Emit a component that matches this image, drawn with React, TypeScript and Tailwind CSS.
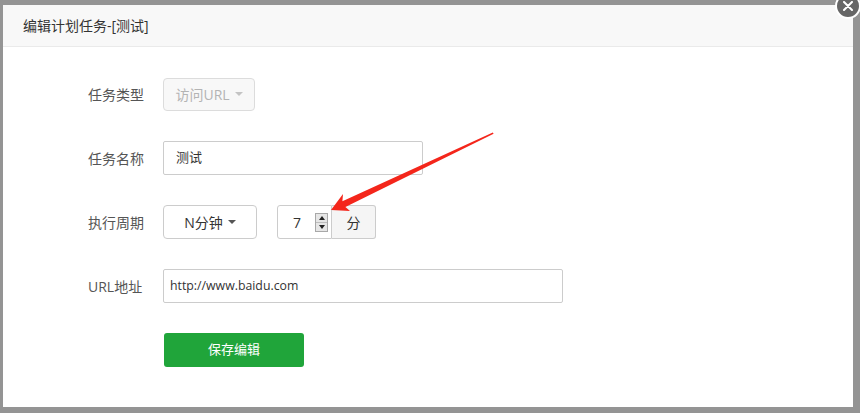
import React from 'react';

const font = "font-['Open_Sans','Noto_Sans_CJK_SC',sans-serif]";

function Caret({ color = '#777' }: { color?: string }) {
  return (
    <span
      className="inline-block w-0 h-0 border-x-[4px] border-x-transparent border-t-[4px] ml-[5px]"
      style={{ borderTopColor: color }}
    />
  );
}

function Spinner() {
  return (
    <div className="w-[13px] h-[19px] border border-[#a8a8a8] bg-[#e6e6e6] flex flex-col">
      <div className="flex-1 flex items-center justify-center border-b border-[#bdbdbd]">
        <span className="w-0 h-0 border-x-[3px] border-x-transparent border-b-[4px] border-b-[#222]" />
      </div>
      <div className="flex-1 flex items-center justify-center">
        <span className="w-0 h-0 border-x-[3px] border-x-transparent border-t-[4px] border-t-[#222]" />
      </div>
    </div>
  );
}

function Row({ label, children }: { label: string; children: React.ReactNode }) {
  return (
    <div className="flex items-center h-[34px]">
      <div className="w-[75px] text-[14px] text-[#555]">{label}</div>
      {children}
    </div>
  );
}

export default function App() {
  return (
    <div className={`relative w-[860px] h-[413px] bg-[#949494] overflow-hidden ${font}`}>
      <div className="relative ml-[3px] mt-[5px] w-[850px] h-[402px] bg-white">
        <div className="h-[42px] bg-[#f8f8f8] border-b border-[#eaeaea] pl-[20px] flex items-center text-[14px] text-[#333]">
          编辑计划任务-[测试]
        </div>

        <div className="pt-[30px] pl-[85px] flex flex-col gap-[30px]">
          <Row label="任务类型">
            <div className="w-[92px] h-[33px] border border-[#dcdcdc] rounded-[4px] bg-[#f8f8f8] flex items-center justify-center text-[14px] text-[#b4b4b4]">
              访问URL
              <Caret color="#c4c4c4" />
            </div>
          </Row>

          <Row label="任务名称">
            <div className="w-[260px] h-[34px] border border-[#ccc] rounded-[2px] flex items-center px-[12px] text-[13px] text-[#333]">
              测试
            </div>
          </Row>

          <Row label="执行周期">
            <div className="w-[94px] h-[34px] border border-[#ccc] rounded-[4px] bg-white flex items-center justify-center text-[14px] text-[#333]">
              N分钟
              <Caret color="#555" />
            </div>
            <div className="ml-[20px] flex h-[34px]">
              <div className="w-[55px] h-full border border-[#ccc] rounded-l-[3px] flex items-center justify-end pr-[3px] text-[14px] text-[#333]">
                7
                <div className="ml-[14px]">
                  <Spinner />
                </div>
              </div>
              <div className="w-[44px] h-full border border-l-0 border-[#ccc] rounded-r-[3px] bg-[#f5f5f5] flex items-center justify-center text-[14px] text-[#333]">
                分
              </div>
            </div>
          </Row>

          <Row label="URL地址">
            <div className="w-[400px] h-[34px] border border-[#ccc] rounded-[2px] flex items-center px-[6px] text-[12.3px] text-[#333]">
              http://www.baidu.com
            </div>
          </Row>

          <div className="flex h-[34px] pl-[76px]">
            <button className="w-[140px] h-[34px] bg-[#20a53a] rounded-[3px] text-white text-[13px]">
              保存编辑
            </button>
          </div>
        </div>

        <div className="absolute -right-[8px] -top-[12px] w-[26px] h-[26px] rounded-full bg-[#666] border-2 border-white flex items-center justify-center">
          <svg width="10" height="10" viewBox="0 0 10 10">
            <path d="M1 1 L9 9 M9 1 L1 9" stroke="white" strokeWidth="2" strokeLinecap="round" />
          </svg>
        </div>
      </div>

      <svg className="absolute inset-0 pointer-events-none" width="860" height="413" viewBox="0 0 860 413">
        <polygon
          points="331,210 343,194 342.4,201.3 492.8,132.5 493.6,133.8 345.4,206.9 350,211"
          fill="#f4261b"
        />
      </svg>
    </div>
  );
}
